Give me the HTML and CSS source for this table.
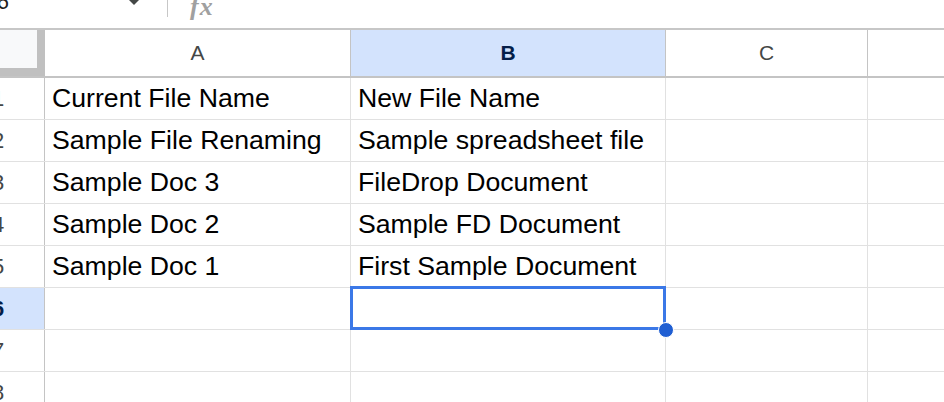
FILE: index.html
```html
<!DOCTYPE html>
<html>
<head>
<meta charset="utf-8">
<link rel="stylesheet" href="styles.css">
</head>
<body>
<div class="topbar">
  <div class="namebox">
    <span class="namebox-text">B6</span>
    <svg class="caret" width="10" height="6" viewBox="0 0 10 6"><path d="M0 0 L10 0 L5 5 Z" fill="#444746"/></svg>
  </div>
  <div class="sep"></div>
  <div class="fx">fx</div>
</div>
<div class="sheet">
  <div class="row head">
    <div class="corner"></div>
    <div class="ch a">A</div>
    <div class="ch b sel">B</div>
    <div class="ch c">C</div>
    <div class="ch d"></div>
  </div>
  <div class="row">
    <div class="rh"><span class="num">1</span></div>
    <div class="cell a">Current File Name</div>
    <div class="cell b">New File Name</div>
    <div class="cell c"></div>
    <div class="cell d"></div>
  </div>
  <div class="row">
    <div class="rh"><span class="num">2</span></div>
    <div class="cell a">Sample File Renaming</div>
    <div class="cell b">Sample spreadsheet file</div>
    <div class="cell c"></div>
    <div class="cell d"></div>
  </div>
  <div class="row">
    <div class="rh"><span class="num">3</span></div>
    <div class="cell a">Sample Doc 3</div>
    <div class="cell b">FileDrop Document</div>
    <div class="cell c"></div>
    <div class="cell d"></div>
  </div>
  <div class="row">
    <div class="rh"><span class="num">4</span></div>
    <div class="cell a">Sample Doc 2</div>
    <div class="cell b">Sample FD Document</div>
    <div class="cell c"></div>
    <div class="cell d"></div>
  </div>
  <div class="row">
    <div class="rh"><span class="num">5</span></div>
    <div class="cell a">Sample Doc 1</div>
    <div class="cell b">First Sample Document</div>
    <div class="cell c"></div>
    <div class="cell d"></div>
  </div>
  <div class="row">
    <div class="rh rh-sel"><span class="num">6</span></div>
    <div class="cell a"></div>
    <div class="cell b active"><div class="selbox"></div><div class="handle"></div></div>
    <div class="cell c"></div>
    <div class="cell d"></div>
  </div>
  <div class="row">
    <div class="rh"><span class="num">7</span></div>
    <div class="cell a"></div>
    <div class="cell b"></div>
    <div class="cell c"></div>
    <div class="cell d"></div>
  </div>
  <div class="row">
    <div class="rh"><span class="num">8</span></div>
    <div class="cell a"></div>
    <div class="cell b"></div>
    <div class="cell c"></div>
    <div class="cell d"></div>
  </div>
</div>
</body>
</html>
```

FILE: styles.css
```css
html, body {
  margin: 0;
  padding: 0;
  background: #ffffff;
}
body {
  width: 944px;
  height: 402px;
  overflow: hidden;
  font-family: "Liberation Sans", Arial, sans-serif;
}
.topbar {
  height: 28px;
  border-bottom: 2px solid #c7c7c7;
  display: flex;
  align-items: flex-start;
  overflow: hidden;
}
.namebox {
  width: 139px;
  display: flex;
  align-items: flex-start;
}
.namebox-text {
  font-size: 22px;
  line-height: 22px;
  color: #1f1f1f;
  margin-left: -18px;
  margin-top: -9px;
}
.caret {
  margin-left: auto;
  margin-top: 0;
  flex: none;
}
.sep {
  width: 1px;
  height: 17px;
  background: #c7c7c7;
  margin-left: 28px;
}
.fx {
  font-family: "Liberation Serif", serif;
  font-style: italic;
  font-weight: bold;
  font-size: 26px;
  line-height: 26px;
  color: #a0a0a0;
  margin-left: 22px;
  margin-top: -6px;
  letter-spacing: 1px;
}
.sheet {
  display: flex;
  flex-direction: column;
}
.row {
  display: flex;
  height: 41px;
  border-bottom: 1px solid #e1e1e1;
  flex: none;
}
.row.head {
  height: 46px;
  border-bottom: 2px solid #c4c4c4;
}
.corner {
  width: 37px;
  height: 38px;
  background: #f8f9fa;
  border-right: 8px solid #c0c0c0;
  border-bottom: 8px solid #c0c0c0;
  flex: none;
}
.ch {
  box-sizing: border-box;
  text-align: center;
  font-size: 21px;
  line-height: 46px;
  color: #444746;
  border-right: 1px solid #c4c4c4;
  flex: none;
}
.ch.sel {
  background: #d3e3fd;
  color: #041e49;
  font-weight: bold;
}
.a { width: 306px; }
.b { width: 315px; }
.c { width: 202px; }
.d { flex: 1 1 auto; border-right: none; }
.rh {
  width: 44px;
  border-right: 1px solid #c4c4c4;
  overflow: hidden;
  display: flex;
  justify-content: flex-end;
  flex: none;
}
.num {
  display: block;
  width: 92px;
  flex: none;
  margin-right: 0;
  text-align: center;
  font-size: 22px;
  line-height: 41px;
  color: #444746;
}
.rh-sel {
  background: #d3e3fd;
}
.rh-sel .num {
  color: #041e49;
  font-weight: bold;
}
.cell {
  box-sizing: border-box;
  border-right: 1px solid #e1e1e1;
  padding: 0 7px;
  font-size: 26.67px;
  line-height: 41px;
  color: #000000;
  white-space: nowrap;
  overflow: visible;
  flex: none;
}
.cell.d { flex: 1 1 auto; border-right: none; }
.active {
  position: relative;
}
.selbox {
  position: absolute;
  left: -1px;
  top: -2px;
  right: -1px;
  bottom: -1px;
  border: 3px solid #3b78e7;
}
.handle {
  position: absolute;
  right: -9px;
  bottom: -9px;
  width: 14px;
  height: 14px;
  border-radius: 50%;
  background: #1f5ed2;
  border: 1.5px solid #ffffff;
}
```
